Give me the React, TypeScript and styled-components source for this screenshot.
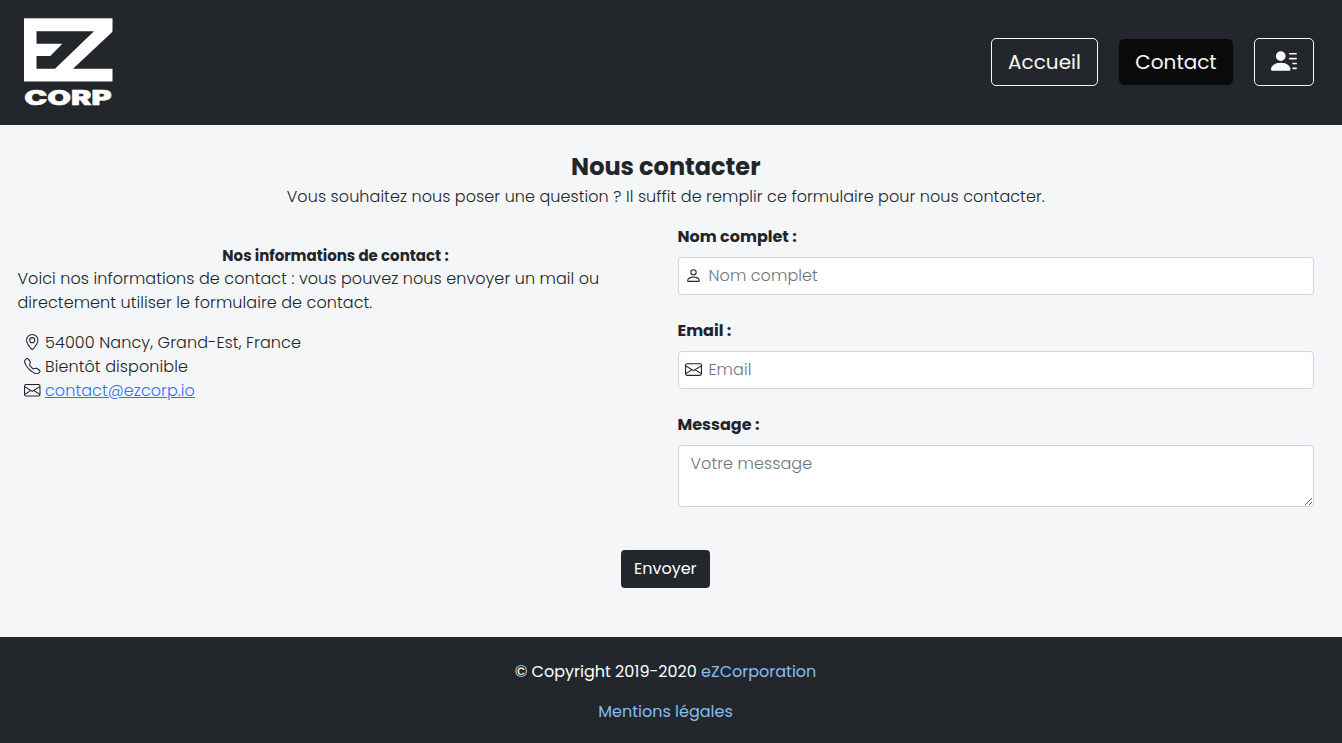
import React from "react";
import styled, { createGlobalStyle, css } from "styled-components";
import { BsEnvelope, BsGeoAlt, BsPerson, BsPersonLinesFill, BsTelephone } from "react-icons/bs";

const GlobalStyle = createGlobalStyle`
  *, *::before, *::after { box-sizing: border-box; }
  html, body { margin: 0; padding: 0; }
  body {
    background: #f5f6f8;
    color: #212529;
    font-family: Poppins, Inter, "Open Sans", sans-serif;
    font-size: 16px;
    font-weight: 300;
    line-height: 24px;
  }
  p, h1, h2, ul { margin: 0; padding: 0; }
`;

const Page = styled.div`
  display: flex;
  flex-direction: column;
  height: 743px;
  overflow: hidden;
`;

const Header = styled.header`
  display: flex;
  align-items: center;
  justify-content: space-between;
  height: 125px;
  padding: 0 28px 1px 18px;
  background: #23272b;
`;

const Nav = styled.nav`
  display: flex;
  align-items: center;
  gap: 21px;
`;

const NavButton = styled.a<{ $active?: boolean; $width: number }>`
  display: flex;
  align-items: center;
  justify-content: center;
  width: ${({ $width }) => $width}px;
  height: 48px;
  border: 1px solid #f8f9fa;
  border-radius: 5px;
  color: #f8f9fa;
  font-size: 20px;
  font-weight: 400;
  text-decoration: none;
  ${({ $active }) =>
    $active &&
    css`
      height: 46px;
      border: 0;
      background: #0a0a0a;
    `}
`;

const UserIcon = styled(BsPersonLinesFill)`
  margin-bottom: 3px;
`;

const Main = styled.main`
  display: flex;
  flex-direction: column;
  align-items: center;
  height: 512px;
  padding: 27px 28px 0 17.5px;
`;

const Title = styled.h1`
  font-size: 24px;
  font-weight: 700;
  line-height: 30px;
`;

const Intro = styled.p`
  margin-top: 3px;
  letter-spacing: 0.066px;
`;

const Columns = styled.div`
  display: grid;
  grid-template-columns: 635px 636.5px;
  column-gap: 25px;
  align-self: stretch;
  margin-top: 16px;
`;

const Info = styled.section`
  padding-top: 22px;
`;

const InfoTitle = styled.h2`
  padding-left: 1px;
  font-size: 15px;
  font-weight: 700;
  line-height: 18px;
  text-align: center;
`;

const InfoText = styled.p`
  margin-top: 2px;
  letter-spacing: 0.07px;
`;

const ContactList = styled.ul`
  margin-top: 16px;
  padding-left: 6.5px;
  list-style: none;
`;

const ContactRow = styled.li`
  display: flex;
  align-items: center;
  gap: 4.5px;
  height: 24px;
  letter-spacing: 0.1px;

  svg {
    margin-bottom: 2px;
  }
`;

const MailLink = styled.a`
  color: #2f72f5;
  letter-spacing: 0.066px;
  text-decoration: underline;
`;

const Form = styled.form`
  display: flex;
  flex-direction: column;
  gap: 24px;
`;

const Field = styled.label`
  display: flex;
  flex-direction: column;
  gap: 8px;
`;

const Label = styled.span`
  font-weight: 700;
`;

const InputFrame = styled.span`
  display: flex;
  align-items: center;
  gap: 7px;
  height: 38px;
  padding: 0 6px;
  background: #fff;
  border: 1px solid #ced4da;
  border-radius: 4px;

  svg {
    margin-bottom: 1px;
  }
`;

const Input = styled.input`
  flex: 1;
  min-width: 0;
  padding: 0;
  border: 0;
  outline: 0;
  background: transparent;
  font: inherit;
  letter-spacing: 0.066px;

  &::placeholder {
    color: #6c757d;
    opacity: 1;
  }
`;

const TextArea = styled.textarea`
  display: block;
  height: 62px;
  padding: 6px 12px;
  border: 1px solid #ced4da;
  border-radius: 4px;
  outline: 0;
  background: #fff;
  font: inherit;
  letter-spacing: 0.066px;

  &::placeholder {
    color: #6c757d;
    opacity: 1;
  }
`;

const Submit = styled.button`
  width: 89px;
  height: 38px;
  margin: 43px 1px 0 0;
  padding: 0;
  border: 0;
  border-radius: 4px;
  background: #23272b;
  color: #fff;
  font: inherit;
  font-weight: 400;
`;

const Footer = styled.footer`
  display: flex;
  flex-direction: column;
  align-items: center;
  gap: 16px;
  height: 106px;
  padding: 23px 11px 0 0;
  background: #23272b;
  color: #fff;
  font-weight: 400;
`;

const FooterLink = styled.a`
  color: #83bdf5;
  text-decoration: none;
`;

const Logo = () => (
  <svg width="100" height="104" viewBox="18 10 100 104" role="img" aria-label="EZ Corp">
    <rect x="24" y="18.3" width="88.5" height="63.2" fill="#fff" />
    <path d="M36.5 31.2H94L55 68.7H36.5V56H50.3L62.3 43.7H36.5Z" fill="#23272b" />
    <path d="M113 31.2V68.7H73Z" fill="#23272b" />
    <text
      x="24.3"
      y="104.6"
      textLength="87.5"
      lengthAdjust="spacingAndGlyphs"
      fontFamily="Inter, sans-serif"
      fontWeight="900"
      fontSize="20.5"
      fill="#fff"
      stroke="#fff"
      strokeWidth="0.5"
    >
      CORP
    </text>
  </svg>
);

const App = () => (
  <>
    <GlobalStyle />
    <Page>
      <Header>
        <Logo />
        <Nav>
          <NavButton $width={107}>Accueil</NavButton>
          <NavButton $width={114} $active>Contact</NavButton>
          <NavButton $width={60} aria-label="Compte">
            <UserIcon size={26} />
          </NavButton>
        </Nav>
      </Header>
      <Main>
        <Title>Nous contacter</Title>
        <Intro>
          Vous souhaitez nous poser une question ? Il suffit de remplir ce formulaire pour nous contacter.
        </Intro>
        <Columns>
          <Info>
            <InfoTitle>Nos informations de contact :</InfoTitle>
            <InfoText>
              Voici nos informations de contact : vous pouvez nous envoyer un mail ou
              <br />
              directement utiliser le formulaire de contact.
            </InfoText>
            <ContactList>
              <ContactRow>
                <BsGeoAlt size={16.5} />
                54000 Nancy, Grand-Est, France
              </ContactRow>
              <ContactRow>
                <BsTelephone size={16.5} />
                Bientôt disponible
              </ContactRow>
              <ContactRow>
                <BsEnvelope size={16.5} />
                <MailLink>contact@ezcorp.io</MailLink>
              </ContactRow>
            </ContactList>
          </Info>
          <Form>
            <Field>
              <Label>Nom complet :</Label>
              <InputFrame>
                <BsPerson size={17} />
                <Input placeholder="Nom complet" />
              </InputFrame>
            </Field>
            <Field>
              <Label>Email :</Label>
              <InputFrame>
                <BsEnvelope size={17} />
                <Input placeholder="Email" />
              </InputFrame>
            </Field>
            <Field>
              <Label>Message :</Label>
              <TextArea placeholder="Votre message" />
            </Field>
          </Form>
        </Columns>
        <Submit type="button">Envoyer</Submit>
      </Main>
      <Footer>
        <p>
          © Copyright 2019-2020 <FooterLink>eZCorporation</FooterLink>
        </p>
        <FooterLink>Mentions légales</FooterLink>
      </Footer>
    </Page>
  </>
);

export default App;
